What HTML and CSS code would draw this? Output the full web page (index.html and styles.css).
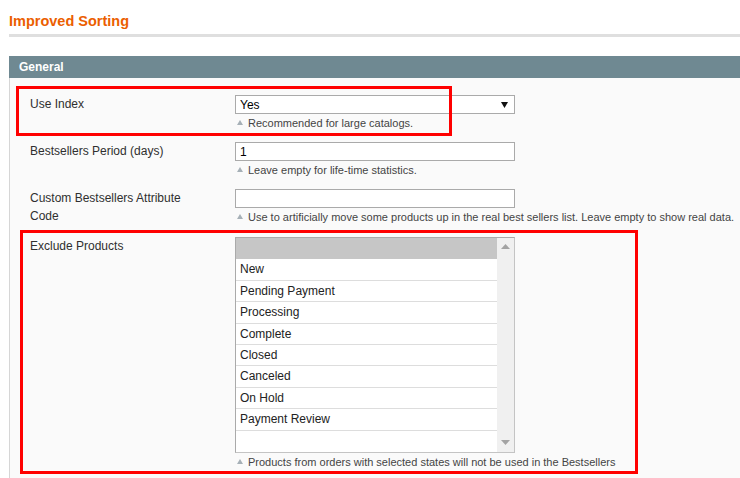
FILE: index.html
```html
<!DOCTYPE html>
<html lang="en">
<head>
    <meta charset="UTF-8">
    <meta name="viewport" content="width=device-width, initial-scale=1.0">
    <title>Improved Sorting</title>
    <link rel="stylesheet" href="styles.css">
</head>
<body>

<div class="page">
    <div class="page-head">
        <h3>Improved Sorting</h3>
    </div>

    <div class="section">
        <div class="section-title">General</div>
        <div class="section-body">

            <!-- Use Index -->
            <div class="field highlight hl-index">
                <label class="field-label">Use Index</label>
                <div class="field-value">
                    <div class="select-box">
                        <span>Yes</span>
                        <svg width="7" height="6" viewBox="0 0 7 6"><polygon points="0,0 7,0 3.5,6" fill="#111"/></svg>
                    </div>
                    <p class="note">Recommended for large catalogs.</p>
                </div>
            </div>

            <!-- Bestsellers Period -->
            <div class="field">
                <label class="field-label" for="period">Bestsellers Period (days)</label>
                <div class="field-value">
                    <input class="text-input" type="text" id="period" value="1">
                    <p class="note">Leave empty for life-time statistics.</p>
                </div>
            </div>

            <!-- Custom Attribute -->
            <div class="field">
                <label class="field-label" for="attrCode">Custom Bestsellers Attribute Code</label>
                <div class="field-value">
                    <input class="text-input" type="text" id="attrCode" value="">
                    <p class="note">Use to artificially move some products up in the real best sellers list. Leave empty to show real data.</p>
                </div>
            </div>

            <!-- Exclude Products -->
            <div class="field highlight hl-exclude">
                <label class="field-label">Exclude Products</label>
                <div class="field-value">
                    <div class="multiselect">
                        <div class="options">
                            <div class="option selected"></div>
                            <div class="option">New</div>
                            <div class="option">Pending Payment</div>
                            <div class="option">Processing</div>
                            <div class="option">Complete</div>
                            <div class="option">Closed</div>
                            <div class="option">Canceled</div>
                            <div class="option">On Hold</div>
                            <div class="option">Payment Review</div>
                        </div>
                        <div class="scrollbar">
                            <svg width="9" height="5" viewBox="0 0 9 5"><polygon points="0,5 9,5 4.5,0" fill="#a3a3a3"/></svg>
                            <svg width="9" height="5" viewBox="0 0 9 5"><polygon points="0,0 9,0 4.5,5" fill="#a3a3a3"/></svg>
                        </div>
                    </div>
                    <p class="note">Products from orders with selected states will not be used in the Bestsellers</p>
                </div>
            </div>

        </div>
    </div>
</div>

</body>
</html>
```

FILE: styles.css
```css
body {
    margin: 0;
    font-family: "Liberation Sans", Arial, sans-serif;
    font-size: 12px;
    color: #2f2f2f;
    background: #fff;
}

.page {
    padding-left: 9px;
}

.page-head {
    padding-top: 12px;
    padding-bottom: 4px;
    border-bottom: 3px solid #dfdfdf;
}

.page-head h3 {
    margin: 0;
    font-size: 14.5px;
    line-height: 18px;
    color: #eb5e00;
}

.section {
    margin-top: 19px;
}

.section-title {
    background: #6f8992;
    color: #fff;
    font-weight: bold;
    line-height: 22px;
    padding-left: 10px;
}

.section-body {
    background: #fafafa;
    border-left: 1px solid #d6d6d6;
    padding: 17px 0 9px 20px;
    display: flex;
    flex-direction: column;
    gap: 12px;
}

.field {
    position: relative;
    display: grid;
    grid-template-columns: 170px auto;
    column-gap: 35px;
    line-height: 18px;
}

.field-label {
    color: #2f2f2f;
}

.select-box,
.text-input {
    box-sizing: border-box;
    width: 280px;
    height: 19px;
    border: 1px solid #aaa;
    background: #fff;
    font-family: inherit;
    font-size: 12px;
    color: #000;
}

.select-box {
    display: flex;
    align-items: center;
    justify-content: space-between;
    padding: 0 6px 0 4px;
}

.text-input {
    display: block;
    margin: 0;
    padding: 0 4px;
    outline: none;
}

.note {
    position: relative;
    margin: 2px 0 0;
    padding-left: 13px;
    font-size: 11px;
    line-height: 14px;
    color: #444;
    white-space: nowrap;
}

.note::before {
    content: "";
    position: absolute;
    left: 2px;
    top: 4px;
    border-left: 3px solid transparent;
    border-right: 3px solid transparent;
    border-bottom: 5px solid #a6b0b7;
}

.multiselect {
    box-sizing: border-box;
    width: 280px;
    height: 216px;
    border: 1px solid #aaa;
    border-right-color: #c4c4c4;
    border-bottom-color: #c4c4c4;
    background: #fff;
    display: flex;
}

.options {
    flex: 1;
}

.option {
    box-sizing: border-box;
    height: 21.4px;
    line-height: 21px;
    padding-left: 4px;
    border-bottom: 1px solid #ddd;
    color: #222;
}

.option.selected {
    background: #c6c6c6;
    border-bottom-color: #c6c6c6;
}

.scrollbar {
    width: 17px;
    background: #f0f0f0;
    display: flex;
    flex-direction: column;
    justify-content: space-between;
    align-items: center;
    padding: 6px 0 7px;
    box-sizing: border-box;
}

.scrollbar svg {
    display: block;
}

/* red annotation frames */
.highlight::after {
    content: "";
    position: absolute;
    box-sizing: border-box;
    border: 3px solid #f00;
    pointer-events: none;
}

.hl-index::after {
    top: -9px;
    left: -14px;
    width: 436px;
    bottom: -6px;
}

.hl-exclude::after {
    top: -7px;
    left: -10px;
    width: 618px;
    bottom: -5px;
}
```
